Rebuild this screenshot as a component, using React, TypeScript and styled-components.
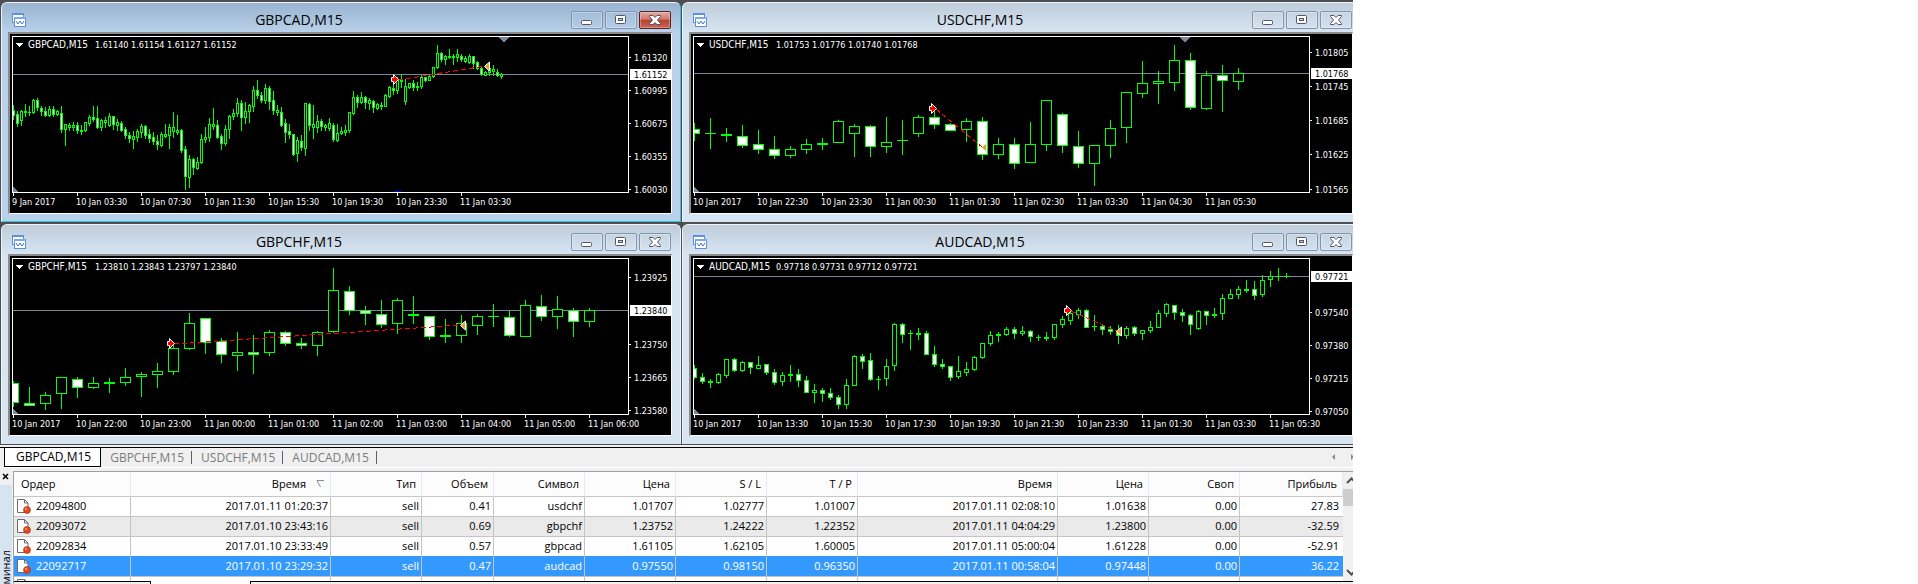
import React from 'react';
import styled, { createGlobalStyle, css } from 'styled-components';

const UI_FONT = `'Open Sans', 'Noto Sans', sans-serif`;
const CHART_FONT = `'DejaVu Sans Condensed', 'DejaVu Sans', sans-serif`;

const GlobalStyle = createGlobalStyle`
  *, *::before, *::after { box-sizing: border-box; }
  body { margin: 0; background: #fff; font-family: ${UI_FONT}; color: #000; }
`;

/* ---------- chart data ---------- */

/** high, body top, body bottom, low, filled */
type Candle = [number, number, number, number, (0 | 1)?];

interface Marker { x: number; y: number }

interface ChartData {
  symbol: string;
  quotes: string;
  step: number;
  candles: Candle[];
  times: string[];
  prices: [string, number][];
  current: [string, number];
  open: Marker;
  close: Marker;
  closeOutline: boolean;
  shift?: boolean;
  dayMark?: boolean;
}

const gbpcad: ChartData = {
  symbol: 'GBPCAD,M15',
  quotes: '1.61140 1.61154 1.61127 1.61152',
  step: 4,
  times: ['9 Jan 2017', '10 Jan 03:30', '10 Jan 07:30', '10 Jan 11:30', '10 Jan 15:30', '10 Jan 19:30', '10 Jan 23:30', '11 Jan 03:30'],
  prices: [['1.61320', 57], ['1.60995', 90], ['1.60675', 123], ['1.60355', 156], ['1.60030', 189]],
  current: ['1.61152', 74],
  open: { x: 394, y: 79 },
  close: { x: 488, y: 66 },
  closeOutline: true,
  shift: true,
  dayMark: true,
  candles: [
    [105, 110, 115, 119, 1], [111, 114, 123, 126, 1], [110, 111, 120, 125], [104, 111, 112, 116], [106, 112, 112, 115],
    [99, 100, 112, 113], [98, 100, 107, 110, 1], [106, 108, 111, 115, 1], [107, 111, 115, 116, 1], [106, 109, 115, 116],
    [106, 109, 114, 116, 1], [110, 111, 114, 115], [106, 113, 129, 132, 1], [124, 124, 129, 145], [123, 125, 127, 130],
    [122, 125, 127, 130], [122, 125, 130, 133, 1], [125, 130, 131, 134], [122, 122, 130, 131], [115, 117, 123, 125],
    [106, 117, 119, 121, 1], [106, 118, 127, 128, 1], [119, 120, 127, 130], [117, 120, 122, 127], [113, 116, 125, 126],
    [116, 116, 124, 129, 1], [119, 122, 125, 130], [121, 123, 130, 131, 1], [127, 129, 135, 138, 1], [132, 135, 138, 142, 1],
    [131, 136, 139, 148], [129, 131, 137, 141], [124, 126, 132, 137], [125, 126, 135, 138, 1], [129, 134, 138, 142, 1],
    [132, 137, 141, 144, 1], [135, 141, 144, 149, 1], [132, 134, 145, 146], [124, 134, 136, 137], [124, 127, 135, 148],
    [112, 127, 131, 137], [115, 130, 132, 134], [129, 130, 150, 152, 1], [146, 149, 176, 189, 1], [155, 159, 177, 187],
    [158, 159, 167, 174, 1], [157, 162, 168, 169], [134, 139, 162, 163], [127, 137, 139, 142], [118, 124, 137, 141],
    [108, 124, 126, 129], [120, 125, 137, 138, 1], [134, 136, 143, 149, 1], [125, 129, 143, 145], [115, 116, 129, 138],
    [109, 113, 116, 119], [98, 103, 113, 116], [100, 103, 117, 130, 1], [102, 111, 117, 123], [104, 105, 111, 122],
    [86, 90, 106, 111], [80, 90, 95, 98, 1], [92, 95, 100, 102, 1], [84, 88, 100, 103], [86, 88, 101, 109, 1],
    [91, 100, 110, 114, 1], [105, 110, 112, 115], [107, 112, 125, 126, 1], [119, 123, 132, 142, 1], [124, 131, 134, 138, 1],
    [134, 134, 154, 155, 1], [137, 140, 153, 161], [135, 141, 147, 150, 1], [103, 103, 148, 155], [103, 104, 125, 130, 1],
    [105, 124, 127, 138], [115, 121, 127, 132], [119, 121, 126, 130, 1], [124, 125, 127, 130], [118, 123, 128, 130],
    [123, 125, 139, 141, 1], [124, 133, 140, 141], [127, 131, 133, 134], [125, 130, 132, 135], [112, 112, 130, 132],
    [91, 97, 113, 114], [95, 97, 102, 107, 1], [92, 97, 102, 103], [96, 97, 102, 108, 1], [98, 100, 103, 109],
    [100, 101, 107, 112, 1], [103, 104, 108, 109], [102, 105, 106, 109], [94, 95, 106, 106], [86, 87, 96, 97],
    [85, 88, 90, 94, 1], [77, 79, 90, 93], [74, 80, 81, 87], [79, 86, 101, 104], [83, 83, 87, 88],
    [80, 83, 87, 90, 1], [82, 86, 87, 90], [75, 77, 86, 88], [77, 77, 80, 81, 1], [75, 76, 80, 80],
    [67, 67, 76, 77], [45, 53, 67, 68], [52, 53, 59, 61, 1], [55, 56, 59, 64], [49, 56, 57, 58],
    [54, 56, 57, 64], [49, 54, 57, 61], [54, 56, 59, 61, 1], [56, 58, 61, 62], [54, 56, 62, 63],
    [56, 56, 63, 68, 1], [61, 62, 68, 69, 1], [66, 68, 74, 75, 1], [71, 72, 75, 75], [66, 68, 72, 75],
    [65, 69, 71, 75], [69, 72, 75, 76, 1], [73, 74, 76, 78],
  ],
};

const usdchf: ChartData = {
  symbol: 'USDCHF,M15',
  quotes: '1.01753 1.01776 1.01740 1.01768',
  step: 16,
  times: ['10 Jan 2017', '10 Jan 22:30', '10 Jan 23:30', '11 Jan 00:30', '11 Jan 01:30', '11 Jan 02:30', '11 Jan 03:30', '11 Jan 04:30', '11 Jan 05:30'],
  prices: [['1.01805', 52], ['1.01745', 86], ['1.01685', 120], ['1.01625', 154], ['1.01565', 189]],
  current: ['1.01768', 73],
  open: { x: 251, y: 108 },
  close: { x: 304, y: 147 },
  closeOutline: false,
  shift: true,
  candles: [
    [123, 129, 133, 140, 1], [118, 133, 133, 148], [128, 134, 135, 141], [125, 136, 145, 147, 1], [130, 144, 149, 153, 1],
    [136, 149, 155, 158, 1], [146, 149, 155, 157], [139, 144, 149, 153], [138, 143, 144, 149], [120, 121, 142, 142],
    [124, 126, 133, 156], [125, 126, 146, 156, 1], [117, 142, 146, 152], [120, 140, 140, 154], [115, 117, 133, 136],
    [107, 117, 124, 128, 1], [123, 124, 130, 130, 1], [118, 121, 129, 141], [117, 121, 154, 159, 1], [138, 144, 154, 158],
    [138, 144, 163, 168, 1], [122, 144, 162, 162], [100, 100, 144, 150], [113, 114, 145, 152, 1], [131, 146, 163, 167, 1],
    [145, 145, 163, 185], [120, 128, 145, 157], [92, 92, 127, 142], [61, 83, 93, 97], [71, 81, 83, 103],
    [45, 60, 82, 90], [53, 60, 107, 109, 1], [71, 75, 108, 109], [65, 75, 80, 111, 1], [68, 73, 81, 89],
  ],
};

const gbpchf: ChartData = {
  symbol: 'GBPCHF,M15',
  quotes: '1.23810 1.23843 1.23797 1.23840',
  step: 16,
  times: ['10 Jan 2017', '10 Jan 22:00', '10 Jan 23:00', '11 Jan 00:00', '11 Jan 01:00', '11 Jan 02:00', '11 Jan 03:00', '11 Jan 04:00', '11 Jan 05:00', '11 Jan 06:00'],
  prices: [['1.23925', 55], ['1.23750', 122], ['1.23665', 155], ['1.23580', 188]],
  current: ['1.23840', 88],
  open: { x: 170, y: 121 },
  close: { x: 464, y: 103 },
  closeOutline: true,
  candles: [
    [159, 161, 180, 184, 1], [165, 181, 183, 183, 1], [170, 173, 181, 187], [155, 155, 171, 186], [155, 157, 165, 175, 1],
    [155, 161, 165, 166], [156, 160, 161, 170], [146, 155, 160, 163], [150, 152, 154, 174], [141, 149, 152, 165],
    [123, 126, 149, 152], [91, 101, 126, 127], [96, 96, 120, 131, 1], [116, 119, 132, 140, 1], [110, 130, 133, 148],
    [113, 130, 132, 151, 1], [108, 110, 130, 133], [109, 110, 121, 123, 1], [116, 121, 123, 126, 1], [109, 110, 123, 133],
    [46, 68, 109, 110], [64, 69, 88, 92, 1], [84, 88, 91, 102, 1], [78, 92, 102, 105, 1], [76, 78, 101, 111],
    [74, 92, 93, 101], [94, 94, 114, 117, 1], [97, 113, 114, 120], [93, 101, 113, 120], [92, 94, 103, 112],
    [82, 94, 94, 104], [89, 95, 113, 114, 1], [78, 83, 114, 114], [73, 84, 94, 98, 1], [74, 87, 94, 106],
    [86, 88, 99, 114, 1], [86, 88, 99, 104],
  ],
};

const audcad: ChartData = {
  symbol: 'AUDCAD,M15',
  quotes: '0.97718 0.97731 0.97712 0.97721',
  step: 8,
  times: ['10 Jan 2017', '10 Jan 13:30', '10 Jan 15:30', '10 Jan 17:30', '10 Jan 19:30', '10 Jan 21:30', '10 Jan 23:30', '11 Jan 01:30', '11 Jan 03:30', '11 Jan 05:30'],
  prices: [['0.97540', 90], ['0.97380', 123], ['0.97215', 156], ['0.97050', 189]],
  current: ['0.97721', 54],
  open: { x: 386, y: 88 },
  close: { x: 439, y: 109 },
  closeOutline: true,
  candles: [
    [143, 146, 155, 156, 1], [151, 155, 159, 161, 1], [157, 159, 160, 165], [151, 152, 160, 161], [137, 137, 153, 155],
    [136, 137, 148, 149, 1], [139, 140, 148, 149], [140, 140, 145, 151, 1], [134, 143, 146, 146], [142, 142, 150, 152, 1],
    [147, 150, 160, 162, 1], [150, 153, 159, 163], [143, 152, 153, 159], [147, 152, 158, 164, 1], [154, 158, 170, 170, 1],
    [162, 168, 170, 180], [166, 168, 171, 179, 1], [166, 171, 175, 177, 1], [173, 175, 182, 186, 1], [157, 163, 182, 186],
    [133, 134, 163, 163], [132, 134, 139, 146, 1], [131, 138, 157, 158, 1], [154, 157, 157, 167], [137, 144, 156, 163],
    [101, 102, 143, 148], [101, 102, 112, 120, 1], [108, 111, 111, 127], [106, 111, 112, 117], [109, 111, 132, 132, 1],
    [124, 132, 142, 144, 1], [137, 142, 144, 146, 1], [144, 144, 155, 158, 1], [134, 149, 154, 156], [140, 147, 150, 153],
    [134, 135, 147, 148], [121, 121, 135, 136], [109, 113, 121, 123], [110, 112, 113, 119], [105, 107, 112, 113],
    [105, 107, 111, 116, 1], [104, 109, 111, 113], [108, 109, 114, 119, 1], [113, 115, 115, 118], [110, 115, 116, 118],
    [102, 102, 115, 117], [94, 97, 102, 105], [90, 91, 98, 102], [86, 88, 92, 96], [87, 88, 105, 105, 1],
    [93, 104, 104, 108], [103, 104, 107, 112, 1], [104, 107, 109, 112, 1], [103, 109, 113, 121, 1], [104, 106, 113, 116],
    [104, 105, 111, 113, 1], [108, 108, 111, 117], [99, 105, 108, 110], [88, 91, 105, 105], [81, 82, 91, 94],
    [83, 83, 90, 97, 1], [87, 90, 93, 99, 1], [92, 93, 102, 112, 1], [88, 89, 106, 107], [89, 89, 93, 102, 1],
    [86, 92, 93, 95], [72, 76, 91, 97], [67, 72, 76, 76], [64, 67, 72, 76], [58, 67, 68, 70],
    [59, 67, 73, 77, 1], [53, 58, 72, 74], [49, 54, 57, 64], [46, 54, 54, 58], [51, 54, 54, 55],
  ],
};

/* ---------- chart drawing ---------- */

const GREEN = '#00ff00';
const SLATE = '#778899';
const BODY_HALF: Record<number, number> = { 4: 1, 8: 2, 16: 5 };

const ChartSvg = styled.svg`
  display: block;
  flex: none;
  background: #000;
  text {
    font-family: ${CHART_FONT};
    font-size: 9px;
    fill: #fff;
    white-space: pre;
  }
  text.symbol { font-size: 10px; }
  text.current { fill: #000; }
`;

function Chart({ data }: { data: ChartData }) {
  const half = BODY_HALF[data.step];
  const { open, close } = data;
  const [price, priceY] = data.current;
  const clipId = `plot-${data.symbol.slice(0, 6)}`;
  return (
    <ChartSvg width={661} height={179} viewBox="10 34 661 179" shapeRendering="crispEdges" role="img" aria-label={data.symbol}>
      <clipPath id={clipId}><rect x={13} y={37} width={615} height={155} /></clipPath>
      <g clipPath={`url(#${clipId})`}>
        <rect x={13} y={priceY} width={615} height={1} fill={SLATE} />
        <path d="M13 187l5 5h-5z" fill={SLATE} />
        {data.shift && <path d="M498 37h11l-5 5h-1z" fill={SLATE} />}
        {data.dayMark && <rect x={394} y={191} width={7} height={1} fill="#0000ff" />}
        {data.candles.map(([high, top, bottom, low, filled], i) => {
          const x = 13 + i * data.step;
          const height = bottom - top + 1;
          return (
            <g key={i}>
              <rect x={x} y={high} width={1} height={low - high + 1} fill={GREEN} />
              <rect x={x - half} y={top} width={half * 2 + 1} height={height} fill={GREEN} />
              {height > 2 && (
                <rect x={x - half + 1} y={top + 1} width={half * 2 - 1} height={height - 2} fill={filled ? '#fff' : '#000'} />
              )}
            </g>
          );
        })}
        <line x1={open.x + 4} y1={open.y + 1} x2={close.x - 3} y2={close.y} stroke="#ff0000" strokeDasharray="5 3" />
      </g>
      <g shapeRendering="auto">
        <path
          transform={`translate(${open.x} ${open.y})`}
          d="M-2.500-1.500h2v-3l5 5l-5 5v-3h-2z"
          fill="#ff0000"
          stroke="#fff"
        />
        <path
          transform={`translate(${close.x} ${close.y})`}
          d={data.closeOutline ? 'M-3.500 .5l5-4.500v9z' : 'M-3 .5l4-3.500v7z'}
          fill="#daa520"
          stroke={data.closeOutline ? '#fff' : 'none'}
        />
      </g>
      <rect x={12.5} y={36.5} width={616} height={156} fill="none" stroke="#fff" />
      <path d="M16 43h7l-3 4h-1z" fill="#fff" />
      <text className="symbol" x={28} y={48}>{data.symbol}</text>
      <text x={95} y={48}>{data.quotes}</text>
      {data.times.map((t, i) => (
        <g key={t}>
          <rect x={13 + i * 64} y={193} width={1} height={3} fill="#fff" />
          <text x={12 + i * 64} y={205}>{t}</text>
        </g>
      ))}
      {data.prices.map(([p, y]) => (
        <g key={p}>
          <rect x={629} y={y} width={2} height={1} fill="#fff" />
          <text x={634} y={y + 4}>{p}</text>
        </g>
      ))}
      <rect x={630} y={priceY - 5} width={41} height={11} fill="#fff" />
      <text className="current" x={634} y={priceY + 4}>{price}</text>
    </ChartSvg>
  );
}

/* ---------- chart windows ---------- */

const Shell = styled.div`
  width: 100%;
  max-width: 1353px;
  height: 100vh;
  overflow: hidden;
  display: flex;
  flex-direction: column;
  background: #f0f0f0;
`;

const Workspace = styled.main`
  flex: none;
  display: grid;
  grid-template-columns: repeat(2, 681px);
  grid-auto-rows: 222px;
  background: #4d4d52;
  padding-bottom: 1px;
  overflow: hidden;
`;

const Win = styled.section<{ $active?: boolean }>`
  display: flex;
  flex-direction: column;
  margin: 2px 0 0 1px;
  padding: 0 8px 8px 6px;
  border: 1px solid #eef4fa;
  border-width: 1px 1px 0 1px;
  border-radius: 6px 6px 0 0;
  background: #d7e4f2;
  ${({ $active }) => $active && css`
    background: #b9d1ea;
    border-right-color: #2fc6dc;
    border-bottom: 1px solid #2fc6dc;
    padding-bottom: 7px;
  `}
`;

const TitleBar = styled.header<{ $active?: boolean }>`
  height: 29px;
  margin: 0 -8px 0 -6px;
  padding: 4px 9px 0 9px;
  display: flex;
  align-items: center;
  border-radius: 5px 5px 0 0;
  background: ${({ $active }) => ($active ? 'linear-gradient(#99b4d1, #b9d1ea)' : 'linear-gradient(#bfcddb, #d7e4f2)')};
`;

const Title = styled.h2`
  flex: 1;
  margin: 0;
  font-size: 14px;
  font-weight: 400;
  line-height: 20px;
  text-align: center;
`;

const Buttons = styled.div`
  display: flex;
  gap: 2px;
`;

const WinButton = styled.button<{ $close?: boolean }>`
  width: 32px;
  height: 18px;
  padding: 0;
  display: grid;
  place-items: center;
  border: 1px solid #8493ad;
  border-radius: 2px;
  background: transparent;
  box-shadow: inset 0 0 0 1px rgba(255, 255, 255, 0.3);
  ${({ $close }) => $close && css`
    border-color: #5a1f28;
    background: linear-gradient(#e3a79d 0%, #d0796c 45%, #b8402d 50%, #cc6655 100%);
  `}
`;

const Bevel = styled.div`
  flex: 1;
  border-style: solid;
  border-width: 2px 1px 1px 2px;
  border-color: #8b8b8b #fff #fff #8b8b8b;
  background: #000;
  overflow: hidden;
`;

const WindowIcon = () => (
  <svg width="16" height="16" viewBox="0 0 16 16" shapeRendering="crispEdges" aria-hidden="true">
    <rect x="1.5" y="1.500" width="11" height="9" fill="#fff" stroke="#5b8fe0" />
    <rect x="1" y="1" width="12" height="2" fill="#5b8fe0" />
    <path d="M3 7l2-2l2 2l2-2l2 1" fill="none" stroke="#5b8fe0" />
    <rect x="3.500" y="5.500" width="11" height="9" fill="#fff" stroke="#5b8fe0" />
    <rect x="3" y="5" width="12" height="2" fill="#7aa7ee" />
    <path d="M5 9l2 3l2-3l2 3l2-3" fill="none" stroke="#3f74cc" shapeRendering="auto" />
  </svg>
);

const MinimizeIcon = () => (
  <svg width="12" height="12" viewBox="0 0 12 12" aria-hidden="true">
    <rect x=".5" y="6.500" width="10" height="4" rx="1" fill="#fff" stroke="#535666" />
  </svg>
);

const MaximizeIcon = () => (
  <svg width="12" height="12" viewBox="0 0 12 12" aria-hidden="true">
    <rect x=".5" y="1.500" width="10" height="8" rx="1" fill="#fff" stroke="#535666" />
    <rect x="3.500" y="4.500" width="4" height="2" fill="#c5d3e2" stroke="#535666" />
  </svg>
);

const CloseIcon = () => (
  <svg width="12" height="12" viewBox="0 0 12 12" aria-hidden="true">
    <path d="M.5 1.500h3.500l2 2l2-2h3.500v1l-3 3.500l3 3.500v1h-3.500l-2-2l-2 2h-3.500v-1l3-3.500l-3-3.500z" fill="#fff" stroke="#535666" />
  </svg>
);

function ChartWindow({ data, active }: { data: ChartData; active?: boolean }) {
  return (
    <Win $active={active}>
      <TitleBar $active={active}>
        <WindowIcon />
        <Title>{data.symbol}</Title>
        <Buttons>
          <WinButton aria-label="Minimize"><MinimizeIcon /></WinButton>
          <WinButton aria-label="Maximize"><MaximizeIcon /></WinButton>
          <WinButton aria-label="Close" $close={active}><CloseIcon /></WinButton>
        </Buttons>
      </TitleBar>
      <Bevel><Chart data={data} /></Bevel>
    </Win>
  );
}

/* ---------- chart tabs ---------- */

const TabBar = styled.nav`
  flex: none;
  display: flex;
  height: 21px;
  padding-left: 4px;
  border-top: 1px solid #000;
  border-bottom: 1px solid #fff;
  margin-top: 2px;
`;

const Tab = styled.button<{ $active?: boolean }>`
  position: relative;
  height: 19px;
  padding: 0 8px 0 9px;
  border: 0;
  background: transparent;
  font-family: ${UI_FONT};
  font-size: 12px;
  line-height: 16px;
  color: #7b7b7b;
  &:not(:first-child)::after {
    content: '';
    position: absolute;
    right: 0;
    top: 3px;
    height: 13px;
    border-right: 1px solid #606060;
  }
  ${({ $active }) => $active && css`
    padding: 0 9px 0 11px;
    background: #fff;
    color: #000;
    border: solid #000;
    border-width: 0 1px 1px 1px;
  `}
`;

const TabScroll = styled.div`
  margin-left: auto;
  display: flex;
  align-items: center;
`;

/* ---------- terminal ---------- */

const Terminal = styled.section`
  flex: 1;
  min-height: 0;
  display: flex;
  margin-top: 3px;
`;

const Side = styled.aside`
  flex: none;
  width: 13px;
  display: flex;
  flex-direction: column;
`;

const SideClose = styled.button`
  height: 14px;
  padding: 0 3px 4px 0;
  border: 0;
  background: transparent;
  display: grid;
  place-items: center;
`;

const SideLabel = styled.div`
  flex: 1;
  min-height: 0;
  display: flex;
  align-items: flex-end;
  margin-right: 1px;
  background: #d6e3f1;
  span {
    writing-mode: vertical-rl;
    transform: rotate(180deg);
    font-size: 11px;
    line-height: 12px;
  }
`;

const Panel = styled.div`
  flex: 1;
  min-width: 0;
  display: flex;
  flex-direction: column;
  border-top: 1px solid #a0a0a0;
  border-left: 1px solid #a0a0a0;
  background: #fff;
`;

const Listing = styled.div`
  flex: 1;
  min-height: 0;
  display: flex;
  overflow: hidden;
`;

const Table = styled.table`
  flex: none;
  width: calc(100% - 10px);
  align-self: flex-start;
  table-layout: fixed;
  border-collapse: separate;
  border-spacing: 0;
  font-size: 11px;
`;

const Th = styled.th<{ $left?: boolean }>`
  height: 25px;
  padding: 0 5px 0 7px;
  border-right: 1px solid #dfeafa;
  border-bottom: 1px solid #c8c8c8;
  background: #fcfcfc;
  font-weight: 400;
  line-height: 16px;
  white-space: nowrap;
  text-align: ${({ $left }) => ($left ? 'left' : 'right')};
  svg { margin: 0 -1px 0 8px; }
`;

const Td = styled.td`
  height: 20px;
  padding: 0 2px 2px;
  border-right: 1px solid #c4c4c4;
  border-bottom: 1px solid #c4c4c4;
  line-height: 16px;
  white-space: nowrap;
  text-align: right;
  &:last-child { border-right: 0; padding-right: 4px; }
`;

const Tr = styled.tr<{ $shade?: boolean; $selected?: boolean; $aboveSelected?: boolean }>`
  background: ${({ $shade, $selected }) => ($selected ? '#3399ff' : $shade ? '#eaeaea' : '#fff')};
  color: ${({ $selected }) => ($selected ? '#fff' : '#000')};
  ${({ $aboveSelected }) => $aboveSelected && css`
    ${Td} { border-bottom-color: #3399ff; }
  `}
`;

const Order = styled.span`
  display: flex;
  align-items: center;
  gap: 5px;
`;

const Scrollbar = styled.div`
  flex: none;
  width: 10px;
  display: flex;
  flex-direction: column;
  background: #f0f0f0;
  overflow: hidden;
`;

const ScrollButton = styled.button`
  flex: none;
  width: 17px;
  height: 17px;
  padding: 0;
  border: 0;
  background: transparent;
  svg { display: block; }
`;

const Thumb = styled.div`
  flex: none;
  height: 17px;
  margin-bottom: auto;
  background: #cdcdcd;
`;

const BottomTabs = styled.div`
  flex: none;
  display: flex;
  height: 3px;
`;

const BottomTab = styled.div<{ $width?: number; $open?: boolean }>`
  flex: ${({ $width }) => ($width ? `0 0 ${$width}px` : '1')};
  background: ${({ $open }) => ($open ? '#fff' : '#f0f0f0')};
  border: 0 solid #000;
  border-width: ${({ $open }) => ($open ? '0 1px' : '1px 0 0')};
`;

const DocIcon = () => (
  <svg width="15" height="16" viewBox="0 0 15 16" aria-hidden="true">
    <path d="M1.500 1.500h7l3.500 3.500v9.500h-10.500z" fill="#fff" stroke="#6b6b6b" />
    <path d="M8.500 1.500v3.500h3.500" fill="none" stroke="#6b6b6b" />
    <circle cx="11" cy="12" r="3.500" fill="#e04a1c" stroke="#a52c08" strokeWidth=".6" />
    <circle cx="10" cy="11" r="1" fill="#f6a58a" />
  </svg>
);

const columns: [string, number?][] = [
  ['Ордер', 117], ['Время', 200], ['Тип', 91], ['Объем', 72], ['Символ', 91], ['Цена', 91],
  ['S / L', 91], ['T / P', 91], ['Время', 200], ['Цена', 91], ['Своп', 91], ['Прибыль'],
];

const orders: string[][] = [
  ['22094800', '2017.01.11 01:20:37', 'sell', '0.41', 'usdchf', '1.01707', '1.02777', '1.01007', '2017.01.11 02:08:10', '1.01638', '0.00', '27.83'],
  ['22093072', '2017.01.10 23:43:16', 'sell', '0.69', 'gbpchf', '1.23752', '1.24222', '1.22352', '2017.01.11 04:04:29', '1.23800', '0.00', '-32.59'],
  ['22092834', '2017.01.10 23:33:49', 'sell', '0.57', 'gbpcad', '1.61105', '1.62105', '1.60005', '2017.01.11 05:00:04', '1.61228', '0.00', '-52.91'],
  ['22092717', '2017.01.10 23:29:32', 'sell', '0.47', 'audcad', '0.97550', '0.98150', '0.96350', '2017.01.11 00:58:04', '0.97448', '0.00', '36.22'],
];

const SELECTED = 3;

export default function App() {
  return (
    <>
      <GlobalStyle />
      <Shell>
        <Workspace>
          <ChartWindow data={gbpcad} active />
          <ChartWindow data={usdchf} />
          <ChartWindow data={gbpchf} />
          <ChartWindow data={audcad} />
        </Workspace>

        <TabBar>
          <Tab $active>GBPCAD,M15</Tab>
          <Tab>GBPCHF,M15</Tab>
          <Tab>USDCHF,M15</Tab>
          <Tab>AUDCAD,M15</Tab>
          <TabScroll>
            <svg width="22" height="9" viewBox="0 0 22 9" aria-hidden="true">
              <path d="M4 1v6L1 4z" fill="#8a8a8a" />
              <path d="M20 1v6l3-3z" fill="#8a8a8a" />
            </svg>
          </TabScroll>
        </TabBar>

        <Terminal>
          <Side>
            <SideClose aria-label="Close panel">
              <svg width="7" height="7" viewBox="0 0 7 7" aria-hidden="true">
                <path d="M1 1l5 5M6 1l-5 5" stroke="#000" strokeWidth="1.600" />
              </svg>
            </SideClose>
            <SideLabel><span>минал</span></SideLabel>
          </Side>
          <Panel>
            <Listing>
              <Table>
                <colgroup>
                  {columns.map(([, width], i) => <col key={i} width={width} />)}
                </colgroup>
                <thead>
                  <tr>
                    {columns.map(([label], i) => (
                      <Th key={i} $left={i === 0}>
                        {label}
                        {i === 1 && (
                          <svg width="12" height="8" viewBox="0 0 12 8" aria-hidden="true">
                            <path d="M10 .5h-7l3.500 6.500" fill="none" stroke="#8a8a8a" />
                          </svg>
                        )}
                      </Th>
                    ))}
                  </tr>
                </thead>
                <tbody>
                  {orders.map((row, r) => (
                    <Tr key={row[0]} $shade={r % 2 === 1} $selected={r === SELECTED} $aboveSelected={r === SELECTED - 1}>
                      {row.map((cell, i) => (
                        <Td key={i}>{i === 0 ? <Order><DocIcon />{cell}</Order> : cell}</Td>
                      ))}
                    </Tr>
                  ))}
                  <Tr>
                    {columns.map((_, i) => <Td key={i}>{i === 0 && <Order><DocIcon /></Order>}</Td>)}
                  </Tr>
                </tbody>
              </Table>
              <Scrollbar>
                <ScrollButton aria-label="Scroll up">
                  <svg width="17" height="17" viewBox="0 0 17 17"><path d="M4 11l4.500-4.500l4.500 4.500" fill="none" stroke="#505050" strokeWidth="2" /></svg>
                </ScrollButton>
                <Thumb />
                <ScrollButton aria-label="Scroll down">
                  <svg width="17" height="17" viewBox="0 0 17 17"><path d="M4 6l4.500 4.500l4.500-4.500" fill="none" stroke="#505050" strokeWidth="2" /></svg>
                </ScrollButton>
              </Scrollbar>
            </Listing>
            <BottomTabs>
              <BottomTab $width={136} />
              <BottomTab $width={101} $open />
              <BottomTab />
            </BottomTabs>
          </Panel>
        </Terminal>
      </Shell>
    </>
  );
}
